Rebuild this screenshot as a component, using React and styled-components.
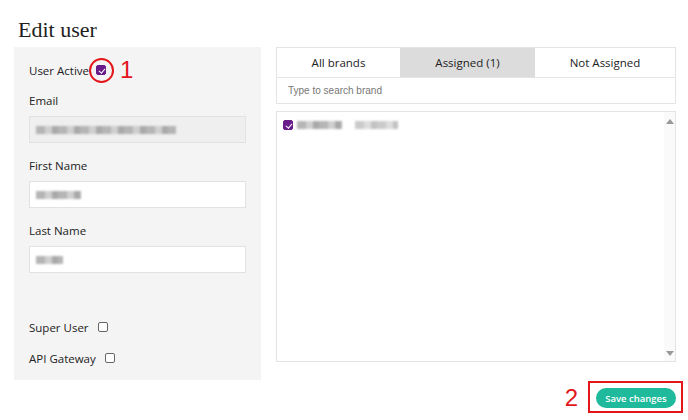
import React from "react";
import styled, { createGlobalStyle } from "styled-components";

const GlobalStyle = createGlobalStyle`
  body {
    margin: 0;
    background: #fff;
    font-family: "Open Sans", "Noto Sans", sans-serif;
    color: #222;
  }
`;

const Page = styled.div`
  width: 688px;
  height: 420px;
  padding: 17px 12px 0 14px;
  box-sizing: border-box;
  overflow: hidden;
`;

const Title = styled.h1`
  margin: 0 0 4px 4px;
  font-family: "Liberation Serif", "DejaVu Serif", serif;
  font-weight: 400;
  font-size: 22px;
  line-height: 26px;
  color: #1e1e1e;
`;

const Columns = styled.div`
  display: grid;
  grid-template-columns: 247px 400px;
  gap: 15px;
  align-items: start;
`;

const Panel = styled.div`
  background: #f4f4f4;
  padding: 15px 15px 14px;
  display: flex;
  flex-direction: column;
  height: 333px;
  box-sizing: border-box;
`;

const CheckRow = styled.div`
  display: flex;
  align-items: center;
  gap: ${({ $gap }) => $gap || 8}px;
  height: 16px;
  margin-top: ${({ $top }) => $top || 0}px;
  font-size: 11.5px;
`;

const Label = styled.div`
  font-size: 11.5px;
  line-height: 16px;
  margin-top: 15px;
`;

const Input = styled.div`
  height: 27px;
  margin-top: 7px;
  box-sizing: border-box;
  border: 1px solid #e2e2e2;
  background: ${({ $disabled }) => ($disabled ? "#efefef" : "#fff")};
  display: flex;
  align-items: center;
  padding-left: 6px;
`;

const Redacted = styled.span`
  display: inline-block;
  width: ${({ $w }) => $w}px;
  height: 8px;
  margin-right: ${({ $gap }) => $gap || 0}px;
  background: repeating-linear-gradient(
    90deg,
    #b5b5b5 0 9px,
    #cfcfcf 9px 16px,
    #a9a9a9 16px 22px
  );
  filter: blur(0.8px);
  opacity: ${({ $light }) => ($light ? 0.7 : 1)};
`;

const Box = styled.span`
  position: relative;
  display: inline-block;
  width: 10px;
  height: 10px;
  box-sizing: border-box;
  border-radius: 2px;
  border: 1px solid ${({ $checked }) => ($checked ? "#6a1b8a" : "#666")};
  background: ${({ $checked }) => ($checked ? "#6a1b8a" : "#fff")};
  &::after {
    content: "";
    display: ${({ $checked }) => ($checked ? "block" : "none")};
    position: absolute;
    left: 2.5px;
    top: 0.5px;
    width: 2.5px;
    height: 5px;
    border: solid #fff;
    border-width: 0 1.5px 1.5px 0;
    transform: rotate(40deg);
  }
`;

const Marked = styled.span`
  position: relative;
  display: inline-flex;
  &::before {
    content: "";
    position: absolute;
    left: -7px;
    top: -7px;
    width: 21px;
    height: 21px;
    border: 2px solid #e3161b;
    border-radius: 50%;
  }
`;

const Note = styled.span`
  color: #e3161b;
  font-family: "Liberation Sans", Arial, sans-serif;
  font-size: 24px;
  line-height: 20px;
  margin-left: ${({ $left }) => $left || 0}px;
`;

const Spacer = styled.div`
  flex: 1;
`;

const Right = styled.div`
  display: flex;
  flex-direction: column;
`;

const Tabs = styled.div`
  display: grid;
  grid-template-columns: 123px 135px 1fr;
  border: 1px solid #e4e4e4;
  height: 31px;
  box-sizing: border-box;
`;

const Tab = styled.div`
  display: flex;
  align-items: center;
  justify-content: center;
  font-size: 11.5px;
  color: #222;
  background: ${({ $active }) => ($active ? "#dcdcdc" : "#fff")};
`;

const Search = styled.div`
  height: 26px;
  box-sizing: border-box;
  border: 1px solid #e4e4e4;
  border-top: none;
  display: flex;
  align-items: center;
  padding-left: 11px;
  font-family: "Liberation Sans", Arial, sans-serif;
  font-size: 10px;
  color: #777;
`;

const List = styled.div`
  margin-top: 7px;
  height: 251px;
  box-sizing: border-box;
  border: 1px solid #e4e4e4;
  display: flex;
`;

const Items = styled.div`
  flex: 1;
  padding: 8px 6px;
`;

const Item = styled.div`
  display: flex;
  align-items: center;
  gap: 4px;
`;

const Scroll = styled.div`
  width: 11px;
  background: #fafafa;
  display: flex;
  flex-direction: column;
  justify-content: space-between;
  align-items: center;
  padding: 7px 0 5px;
`;

const Arrow = styled.span`
  width: 0;
  height: 0;
  border-left: 4px solid transparent;
  border-right: 4px solid transparent;
  ${({ $down }) =>
    $down ? "border-top: 5px solid #999;" : "border-bottom: 5px solid #999;"}
`;

const Footer = styled.div`
  display: flex;
  justify-content: flex-end;
  align-items: center;
  gap: 18px;
  margin-top: 8px;
`;

const SaveWrap = styled.span`
  position: relative;
  display: inline-flex;
  &::before {
    content: "";
    position: absolute;
    left: -8px;
    right: -7px;
    top: -7px;
    bottom: -5px;
    border: 2px solid #e3161b;
  }
`;

const SaveButton = styled.button`
  height: 20px;
  width: 80px;
  border: none;
  border-radius: 10px;
  background: #1fb99b;
  color: #fff;
  font-family: "Open Sans", sans-serif;
  font-weight: 600;
  font-size: 9.5px;
  padding: 0;
`;

export default function App() {
  return (
    <>
      <GlobalStyle />
      <Page>
        <Title>Edit user</Title>
        <Columns>
          <Panel>
            <CheckRow $gap={7}>
              User Active
              <Marked>
                <Box $checked />
              </Marked>
              <Note $left={7}>1</Note>
            </CheckRow>
            <Label>Email</Label>
            <Input $disabled>
              <Redacted $w={140} />
            </Input>
            <Label>First Name</Label>
            <Input>
              <Redacted $w={45} />
            </Input>
            <Label>Last Name</Label>
            <Input>
              <Redacted $w={27} />
            </Input>
            <Spacer />
            <CheckRow $gap={9}>
              Super User <Box />
            </CheckRow>
            <CheckRow $gap={9} $top={15}>
              API Gateway <Box />
            </CheckRow>
          </Panel>
          <Right>
            <Tabs>
              <Tab>All brands</Tab>
              <Tab $active>Assigned (1)</Tab>
              <Tab>Not Assigned</Tab>
            </Tabs>
            <Search>Type to search brand</Search>
            <List>
              <Items>
                <Item>
                  <Box $checked />
                  <Redacted $w={45} $gap={9} />
                  <Redacted $w={43} $light />
                </Item>
              </Items>
              <Scroll>
                <Arrow />
                <Arrow $down />
              </Scroll>
            </List>
          </Right>
        </Columns>
        <Footer>
          <Note>2</Note>
          <SaveWrap>
            <SaveButton>Save changes</SaveButton>
          </SaveWrap>
        </Footer>
      </Page>
    </>
  );
}
